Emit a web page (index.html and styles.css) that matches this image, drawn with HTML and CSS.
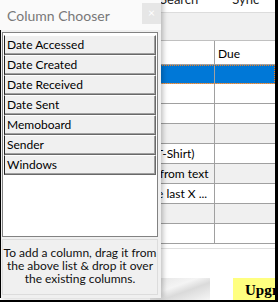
FILE: index.html
```html
<!DOCTYPE html>
<html lang="en">
<head>
    <meta charset="UTF-8">
    <title>Column Chooser</title>
    <link rel="stylesheet" href="styles.css">
</head>
<body>
<div class="screen">
  <div class="app">
    <div class="menubar"><span class="menu search">Search</span><span class="menu">Sync</span></div>
    <div class="toolbar"></div>
    <div class="grid">
      <div class="row head"><div class="c1"></div><div class="c2">Due</div></div>
      <div class="row sel"><div class="c1"></div><div class="c2"></div></div>
      <div class="row"><div class="c1"></div><div class="c2"></div></div>
      <div class="row"><div class="c1"></div><div class="c2"></div></div>
      <div class="row alt"><div class="c1"></div><div class="c2"></div></div>
      <div class="row"><div class="c1">Gift size (T-Shirt)</div><div class="c2"></div></div>
      <div class="row alt"><div class="c1">Create all from text</div><div class="c2"></div></div>
      <div class="row"><div class="c1">Shown the last X ...</div><div class="c2"></div></div>
      <div class="row alt"><div class="c1"></div><div class="c2"></div></div>
      <div class="row"><div class="c1"></div><div class="c2"></div></div>
    </div>
    <div class="bottom">
      <div class="texture"></div>
      <div class="upgrade">Upgrade</div>
    </div>
  </div>

  <div class="chooser">
    <div class="title">
      <span>Column Chooser</span>
      <div class="close">&times;</div>
    </div>
    <div class="body">
      <div class="list">
        <div class="item">Date Accessed</div>
        <div class="item">Date Created</div>
        <div class="item">Date Received</div>
        <div class="item">Date Sent</div>
        <div class="item">Memoboard</div>
        <div class="item">Sender</div>
        <div class="item">Windows</div>
      </div>
      <div class="hint">To add a column, drag it from the above list &amp; drop it over the existing columns.</div>
    </div>
  </div>
</div>
</body>
</html>
```

FILE: styles.css
```css
body {
    margin: 0;
    font-family: Lato, "Noto Sans", sans-serif;
    font-size: 12px;
    color: #000;
}

.screen {
    position: relative;
    width: 278px;
    height: 302px;
    overflow: hidden;
    background: #fff;
}

/* background application */
.app {
    display: flex;
    flex-direction: column;
    width: 275px;
    height: 300px;
    border-right: 3px solid #000;
    border-bottom: 2px solid #000;
}

.menubar {
    height: 12px;
    border-bottom: 1px solid #dcdcdc;
    overflow: hidden;
    line-height: 12px;
    font-size: 13px;
    color: #222;
}
.menu {
    display: inline-block;
    margin-top: -7px;
    vertical-align: top;
}
.search { margin-left: 160px; margin-right: 34px; }

.toolbar {
    height: 27px;
    background: #f0f0f0;
    border-bottom: 1px solid #c0c0c0;
}

.grid {
    display: flex;
    flex-direction: column;
}
.row {
    display: flex;
    height: 19px;
    border-bottom: 1px solid #a0a0a0;
    line-height: 19px;
}
.row.head { height: 23px; line-height: 26px; }
.row.alt { background: #f0f0f0; }
.row.sel {
    height: 18px;
    background: #0078d7;
    outline: 1px dotted #f08020;
    outline-offset: -1px;
}
.c1 {
    width: 215px;
    border-right: 1px solid #a0a0a0;
    white-space: nowrap;
    overflow: hidden;
    padding-left: 107px;
    box-sizing: border-box;
}
.c2 {
    flex: 1;
    padding-left: 3px;
}

.bottom {
    flex: 1;
    display: flex;
    align-items: flex-end;
    border-top: 4px solid #fff;
    box-shadow: inset 0 1px 0 #e0e0e0;
}
.texture {
    width: 60px;
    height: 22px;
    margin-left: 150px;
    background: linear-gradient(160deg, #e4e4e4, #f4f4f4 40%, #dadada 60%, #f6f6f6);
}
.upgrade {
    margin-left: 23px;
    flex: 1;
    height: 22px;
    background: #ffff80;
    padding-left: 12px;
    font-family: "Liberation Serif", serif;
    font-weight: bold;
    font-size: 15px;
    line-height: 24px;
    overflow: hidden;
    white-space: nowrap;
}

/* floating column chooser window */
.chooser {
    position: absolute;
    left: 0;
    top: 0;
    width: 161px;
    height: 298px;
    background: #fafafa;
    box-shadow: 2px 0 5px rgba(0, 0, 0, 0.25);
    display: flex;
    flex-direction: column;
}
.title {
    flex-shrink: 0;
    height: 30px;
    display: flex;
    align-items: center;
    justify-content: space-between;
    padding-left: 7px;
    color: #787878;
    font-size: 14px;
    background: #fafafa;
}
.close {
    width: 19px;
    height: 21px;
    margin-top: -4px;
    background: #e6e6e6;
    color: #fff;
    text-align: center;
    line-height: 20px;
    font-size: 12px;
}
.body {
    flex: 1;
    border-left: 1px solid #000;
    padding: 2px 3px 3px 1px;
    display: flex;
    flex-direction: column;
    gap: 2px;
    background: #f0f0f0;
}
.list {
    flex-shrink: 0;
    height: 205px;
    background: #fff;
    border: 1px solid #828282;
    padding: 2px 1px;
    box-sizing: border-box;
}
.item {
    height: 20px;
    box-sizing: border-box;
    background: #f0f0f0;
    border-top: 1px solid #fff;
    border-left: 1px solid #202020;
    border-right: 1px solid #696969;
    border-bottom: 1px solid #696969;
    box-shadow: inset -1px -1px 0 #a0a0a0;
    padding-left: 2px;
    line-height: 18px;
    color: #000;
    font-size: 12px;
}
.hint {
    flex: 1;
    border: 1px solid #dcdcdc;
    text-align: center;
    padding: 6px 0 0;
    line-height: 13px;
    color: #111;
    font-size: 12px;
}
```
